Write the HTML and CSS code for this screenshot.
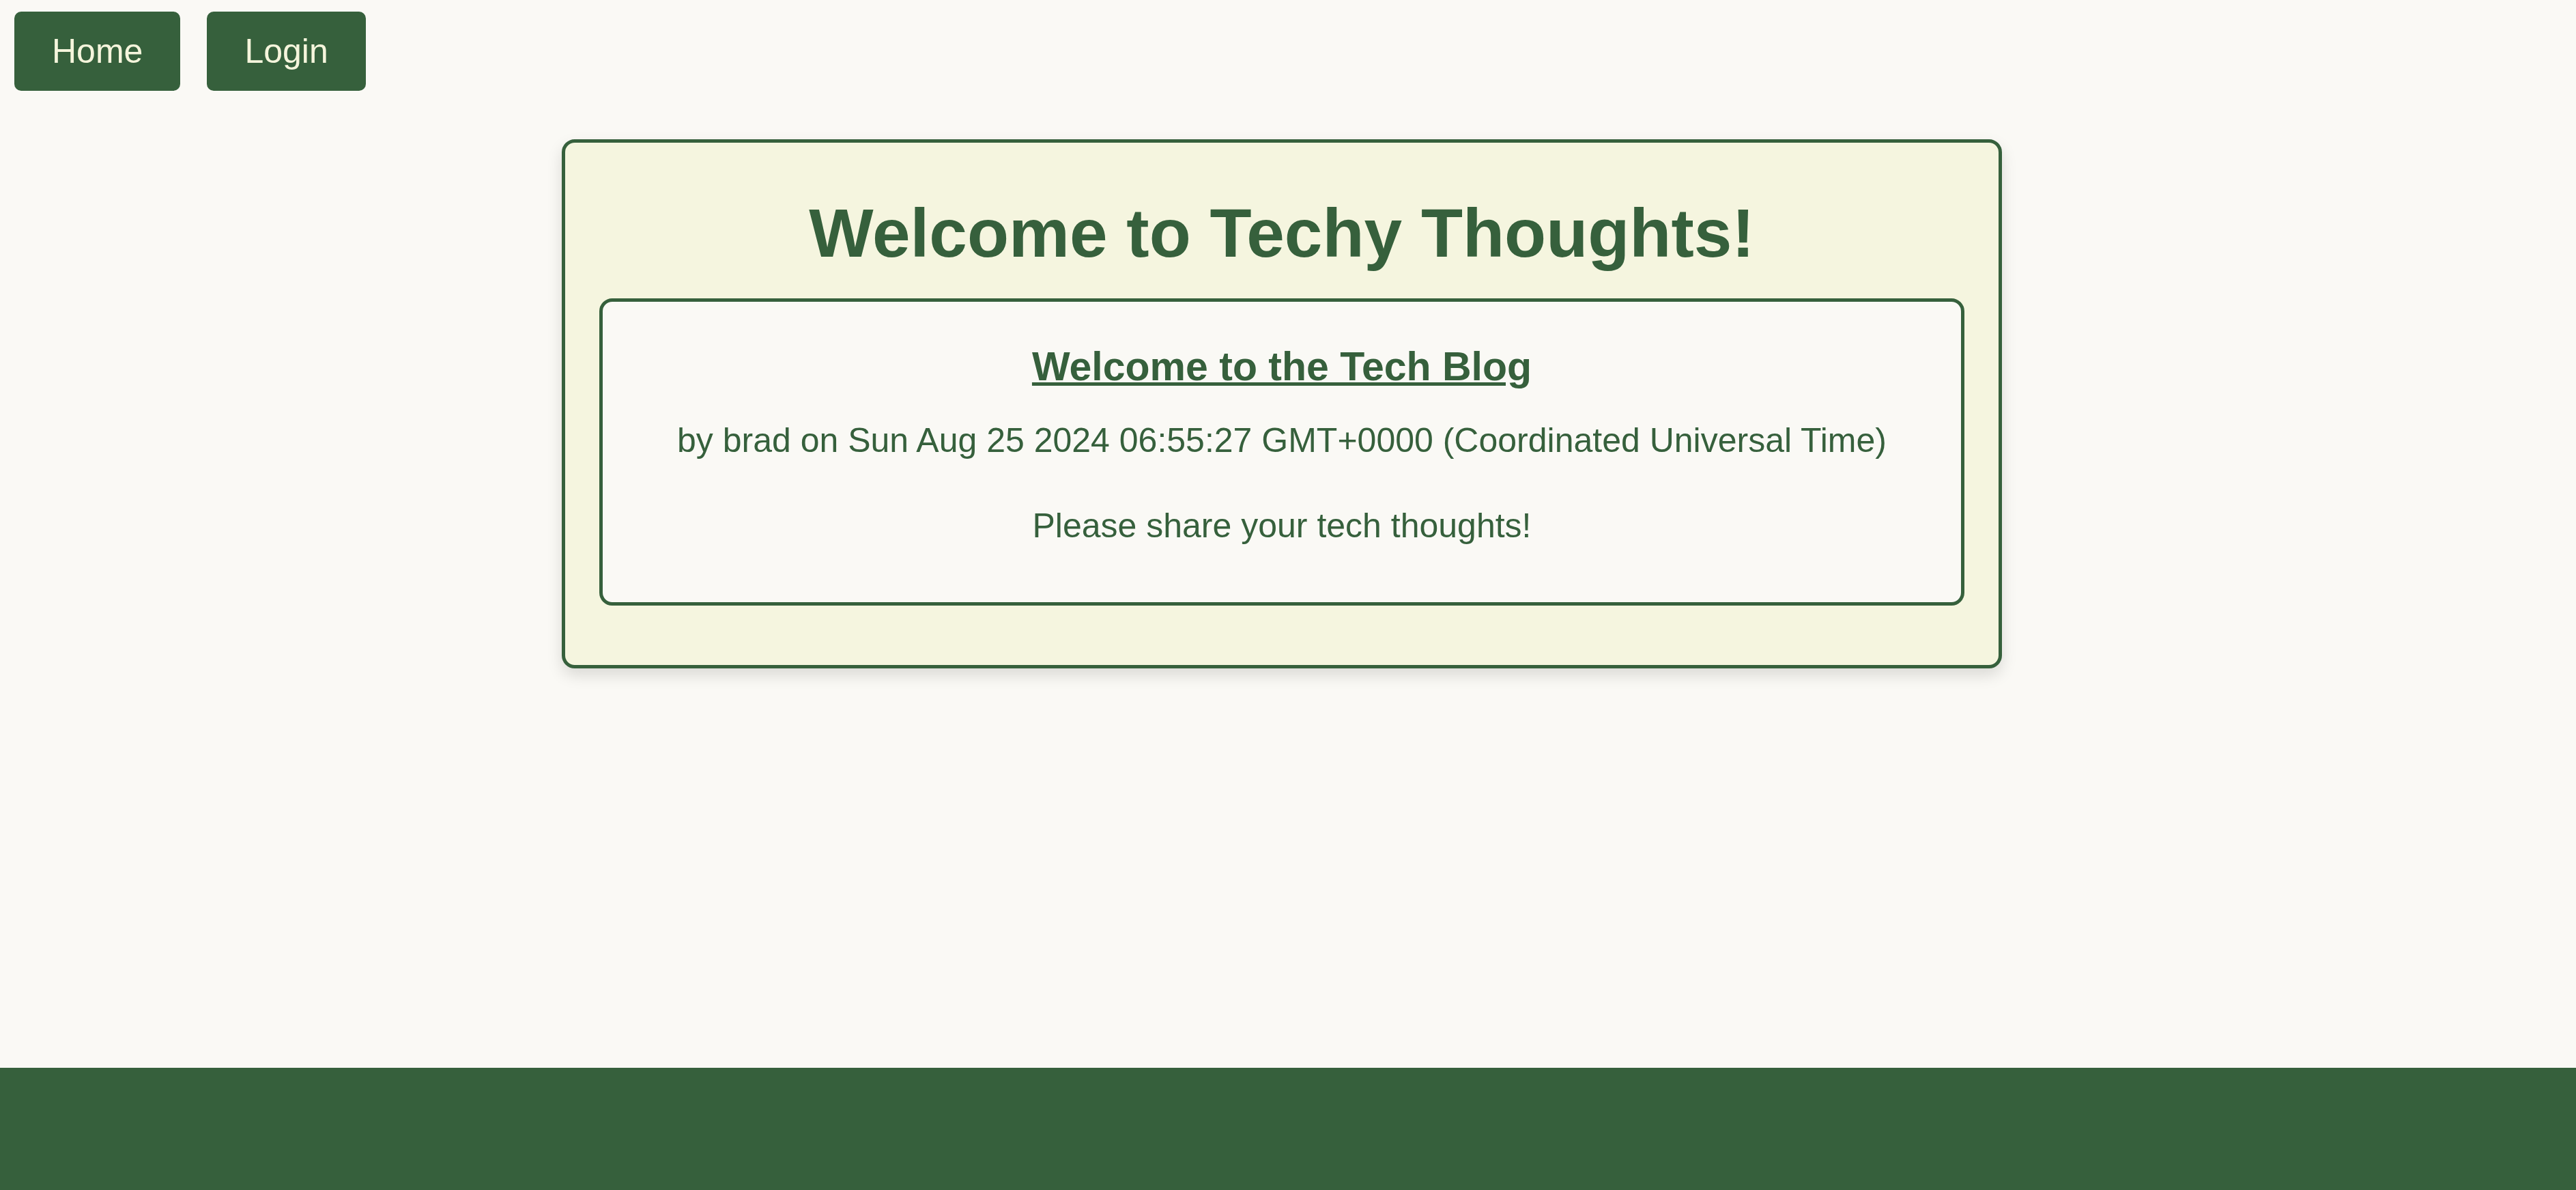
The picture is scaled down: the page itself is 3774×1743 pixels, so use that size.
FILE: index.html
```html
<!DOCTYPE html>
<html lang="en">
<head>
<meta charset="utf-8">
<title>Techy Thoughts</title>
<link rel="stylesheet" href="styles.css">
</head>
<body>
  <nav class="nav">
    <a class="nav-btn" href="#">Home</a>
    <a class="nav-btn" href="#">Login</a>
  </nav>
  <main class="main">
    <section class="card">
      <h1 class="card-title">Welcome to Techy Thoughts!</h1>
      <article class="post">
        <h2 class="post-title"><a href="#">Welcome to the Tech Blog</a></h2>
        <p class="post-meta">by brad on Sun Aug 25 2024 06:55:27 GMT+0000 (Coordinated Universal Time)</p>
        <p class="post-body">Please share your tech thoughts!</p>
      </article>
    </section>
  </main>
  <footer class="footer"></footer>
</body>
</html>
```

FILE: styles.css
```css
* { box-sizing: border-box; }

html, body { height: 100%; }

body {
  margin: 0;
  min-height: 100vh;
  display: flex;
  flex-direction: column;
  background: #faf9f5;
  color: #36603c;
  font-family: "Liberation Sans", Arial, sans-serif;
}

.nav {
  display: flex;
  gap: 39px;
  padding: 17px 0 0 21px;
}

.nav-btn {
  display: block;
  background: #36603c;
  color: #f5f5dc;
  text-decoration: none;
  font-size: 50px;
  line-height: 57px;
  padding: 29.5px 55px;
  border-radius: 10px;
}

.main {
  flex: 1;
  padding: 71px 18px 0 0;
}

.card {
  width: 2110px;
  margin: 0 auto;
  background: #f5f5df;
  border: 5px solid #36603c;
  border-radius: 19px;
  padding: 75px 50px 87px;
  box-shadow: 0 10px 22px rgba(0, 0, 0, 0.13);
}

.card-title {
  margin: 0 0 38px;
  font-size: 100px;
  font-weight: bold;
  line-height: 115px;
  text-align: center;
}

.post {
  background: #faf9f5;
  border: 5px solid #36603c;
  border-radius: 19px;
  padding: 62px 20px 83px;
  text-align: center;
}

.post-title {
  margin: 0 0 46px;
  font-size: 59px;
  font-weight: bold;
  line-height: 67px;
}

.post-title a {
  color: #36603c;
  text-decoration: underline;
}

.post-meta {
  margin: 0 0 67px;
  font-size: 50px;
  line-height: 57.5px;
}

.post-body {
  margin: 0;
  font-size: 50px;
  line-height: 57.5px;
}

.footer {
  height: 179px;
  background: #36603c;
}
```
